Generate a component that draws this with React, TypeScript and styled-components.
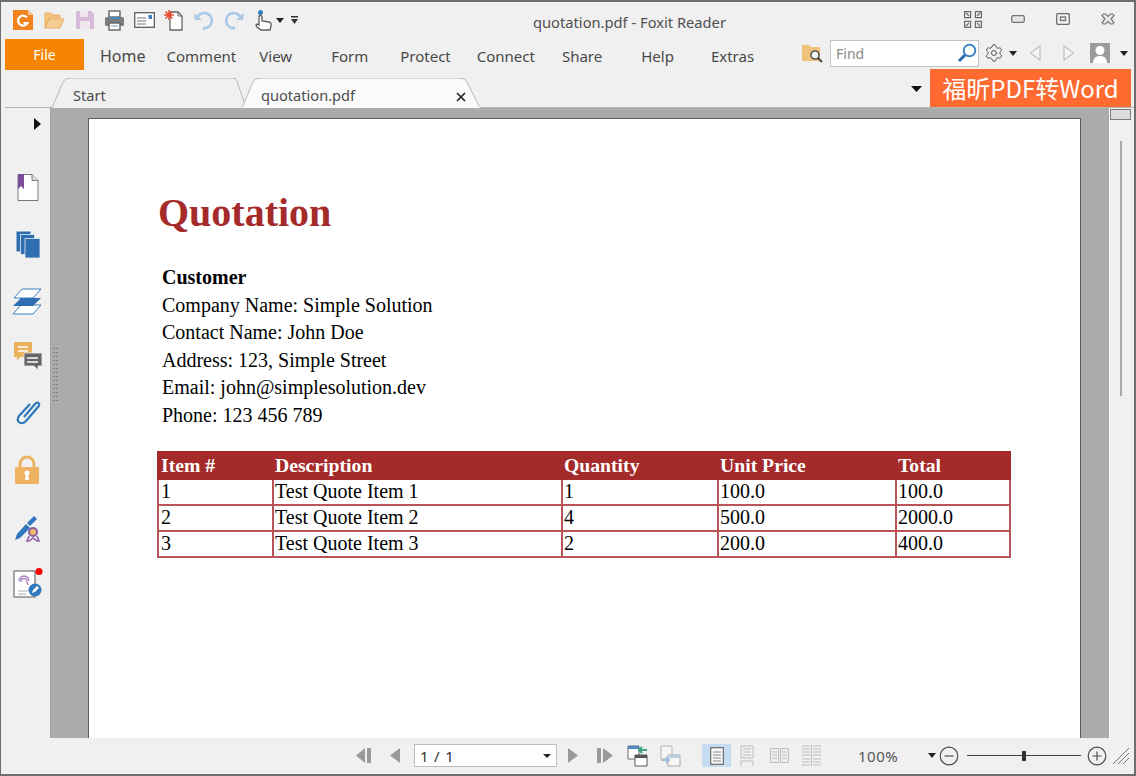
import React from "react";
import styled, { createGlobalStyle } from "styled-components";
import { Settings } from "lucide-react";

const Global = createGlobalStyle`
  html, body { margin: 0; padding: 0; background: #f0f0f0; }
  * { box-sizing: border-box; }
`;

const UI = `"Noto Sans", "Open Sans", sans-serif`;

const Win = styled.div`
  width: 1136px; height: 776px; display: flex; flex-direction: column;
  background: #f0f0f0; border: solid #6e6e6e; border-width: 2px 2px 2px 1px;
  overflow: hidden; font-family: ${UI}; color: #4a4a4a;
`;
const TitleRow = styled.div`
  height: 36px; flex: none; display: flex; align-items: center; padding-left: 11px; position: relative;
`;
const QuickIcon = styled.svg<{ $ml?: number }>`
  flex: none; display: block; margin-left: ${(p) => p.$ml ?? 0}px;
`;
const Title = styled.div`
  position: absolute; left: 532px; top: 11px; font-size: 14.7px; line-height: 19px; color: #4f4f4f; white-space: nowrap;
`;
const WinButtons = styled.div`
  margin-left: auto; display: flex; align-items: center; padding: 0 19px 2px 0;
`;
const MenuRow = styled.div`
  height: 32px; flex: none; display: flex; align-items: center; padding-left: 4px;
`;
const FileBtn = styled.div`
  width: 79px; height: 31px; background: #f58400; color: #fff; font-size: 14px; display: flex; align-items: center; justify-content: center; margin-right: 16px;
`;
const MenuItem = styled.div<{ $ml: number; $big?: boolean }>`
  margin-left: ${(p) => p.$ml}px; padding-top: ${(p) => (p.$big ? 4 : 3)}px; font-size: ${(p) => (p.$big ? 16 : 15)}px; color: #484848; line-height: 20px; white-space: nowrap;
`;
const RightTools = styled.div`
  margin-left: auto; display: flex; align-items: center; padding: 0 6px 2px 0;
`;
const FindBox = styled.div`
  width: 149px; height: 27px; margin-left: 7px; background: #fff; border: 1px solid #c4c4c4; display: flex; align-items: center; justify-content: space-between; padding: 0 1px 0 5px; font-size: 14px; color: #8a8a8a;
`;
const GearWrap = styled.div`
  margin-left: 5px; width: 20px; height: 20px; color: #555; display: flex;
`;
const TabRow = styled.div`
  height: 38px; flex: none; display: flex; align-items: flex-end; position: relative; border-bottom: 1px solid #b4b4b4; margin-left: 4px;
`;
const Tab = styled.div<{ $w: number; $ml: number; $pl: number }>`
  position: relative; width: ${(p) => p.$w}px; height: 30px; margin-left: ${(p) => p.$ml}px; padding-left: ${(p) => p.$pl}px; font-size: 14.6px; line-height: 35px; color: #4c4c4c; margin-bottom: -1px;
  & > span { position: relative; }
`;
const TabShape = styled.svg`
  position: absolute; left: 0; top: 0; display: block;
`;
const TabClose = styled.svg`
  position: absolute; right: 16px; top: 14px;
`;
const TabEnd = styled.div`
  margin-left: auto; display: flex; align-items: center; height: 38px;
`;
const TabCaret = styled.svg`
  display: block; margin-top: 2px;
`;
const Convert = styled.div`
  width: 201px; height: 38px; margin-left: 8px; margin-right: 3px; background: #ff6a30; color: #fff;
  font-family: "Noto Sans CJK SC", "Noto Sans", sans-serif; font-size: 24px; line-height: 38px; text-align: center; white-space: nowrap;
`;
const Body = styled.div`
  flex: 1; min-height: 0; display: flex;
`;
const SideBar = styled.div`
  width: 49px; flex: none; display: flex; flex-direction: column; align-items: center; position: relative; padding-left: 3px;
`;
const SideIcon = styled.svg<{ $mt: number; $ml?: number }>`
  display: block; flex: none; margin-top: ${(p) => p.$mt}px; margin-left: ${(p) => p.$ml ?? 0}px; overflow: visible;
`;
const Canvas = styled.div`
  flex: 1; min-width: 0; background: #ababab; padding: 10px 29px 0 37px; position: relative; overflow: hidden; border-left: 1px solid #a4a4a4;
`;
const Grip = styled.svg`
  position: absolute; left: 2px; top: 240px;
`;
const Page = styled.div`
  width: 993px; height: 640px; background: #fff; border: 1px solid #5b5b5b; border-bottom: 0; padding: 69px 69px 0 69px;
  font-family: "Liberation Serif", "Times New Roman", serif; color: #000;
`;
const H1 = styled.h1`
  margin: 0; font-size: 40px; line-height: 50px; font-weight: 700; color: #a52a2a;
`;
const Info = styled.div`
  margin: 26px 0 0 4px; font-size: 20px; line-height: 27.5px;
`;
const Strong = styled.div`
  font-weight: 700;
`;
const Quote = styled.table`
  margin: 22px 0 0 -1px; width: 852px; table-layout: fixed; border-collapse: collapse; font-size: 20px; line-height: 23px;
  th, td { border: 2px solid #bb5458; padding: 0 0 1px 1px; text-align: left; height: 26px; white-space: nowrap; }
  th:first-child, td:first-child { padding-left: 2px; }
  th { background: #a52a2a; color: #fff; border-color: #a52a2a; font-weight: 700; height: 27px; font-size: 19.7px; padding-bottom: 0; }
`;
const ScrollBar = styled.div`
  width: 25px; flex: none; background: #f0f0f0; position: relative; padding: 1px 0 0 0; border-left: 1px solid #f8f8f8;
`;
const SplitHandle = styled.div`
  width: 21px; height: 11px; background: #dcdcdc; border: 1px solid #7c7c7c;
`;
const Thumb = styled.div`
  width: 2px; height: 255px; margin: 21px 0 0 10px; background: #a9a9a9;
`;
const Status = styled.div`
  height: 36px; flex: none; display: flex; align-items: center; padding: 0 0 1px 355px; color: #4a4a4a;
`;
const PageBox = styled.div`
  width: 143px; height: 23px; margin: 0 0 0 14px; background: #fff; border: 1px solid #bdbdbd; display: flex; align-items: center; justify-content: space-between; padding: 0 5px; font-size: 15px; color: #333; letter-spacing: 0.8px;
`;
const Zoom = styled.div`
  width: 70px; margin-left: 37px; font-size: 15px; color: #555; letter-spacing: 0.5px;
`;
const Slider = styled.div`
  width: 114px; height: 1px; background: #444; margin: 0 6px 0 8px; display: flex; justify-content: center; align-items: center; position: relative;
`;
const Knob = styled.div`
  width: 4px; height: 10px; background: #333;
`;
const ActiveBtn = styled.div`
  width: 29px; height: 23px; margin-left: 21px; background: #c6dcf2; display: flex; align-items: center; justify-content: center;
`;

const Caret = ({ ml = 0 }: { ml?: number }) => (
  <QuickIcon $ml={ml} width="8" height="5" viewBox="0 0 8 5"><path d="M0 0h8L4 5z" fill="#222" /></QuickIcon>
);

const cols = [115, 289, 156, 178, 114];
const rows = [
  ["1", "Test Quote Item 1", "1", "100.0", "100.0"],
  ["2", "Test Quote Item 2", "4", "500.0", "2000.0"],
  ["3", "Test Quote Item 3", "2", "200.0", "400.0"],
];

export default function App() {
  return (
    <Win>
      <Global />
      <TitleRow>
        <QuickIcon width="22" height="22" viewBox="0 0 22 22">
          <path d="M1 1h15l5 5v15H1z" fill="#f2821e" /><path d="M16 1v5h5z" fill="#f8c79a" />
          <path d="M15 8.500a5 5 0 1 0 .5 5.500h-4" fill="none" stroke="#fff" strokeWidth="2.200" />
        </QuickIcon>
        <QuickIcon $ml={10} width="21" height="18" viewBox="0 0 21 18">
          <path d="M1 17V2h6l2 2h7v3H5L1 17z" fill="#f3c47f" stroke="#e9ad5f" /><path d="M1 17l4-9h15l-4 9z" fill="#f6cf95" stroke="#e9ad5f" />
        </QuickIcon>
        <QuickIcon $ml={11} width="18" height="18" viewBox="0 0 18 18">
          <path d="M0 0h15l3 3v15H0z" fill="#d6bcd9" /><path d="M4 0h8v6H4z" fill="#efe6f0" /><path d="M4 10h10v8H4z" fill="#efe6f0" />
        </QuickIcon>
        <QuickIcon $ml={10} width="21" height="21" viewBox="0 0 21 21">
          <path d="M5 1h11v6H5z" fill="#fff" stroke="#6a6a6a" strokeWidth="1.500" /><rect x="1" y="7" width="19" height="9" rx="1.500" fill="#7d7d7d" />
          <path d="M5 7h11v2H5z" fill="#4b8bc4" /><path d="M5 13h11v7H5z" fill="#fff" stroke="#6a6a6a" strokeWidth="1.500" /><path d="M7 16h7" stroke="#6ba2d2" />
        </QuickIcon>
        <QuickIcon $ml={9} width="21" height="16" viewBox="0 0 21 16">
          <rect x="0.700" y="0.700" width="19.600" height="14.600" fill="#fff" stroke="#5f5f5f" strokeWidth="1.300" />
          <path d="M3 6h9M3 9h9M3 12h9" stroke="#777" /><rect x="14.500" y="3" width="3.500" height="4" fill="#3f7fbc" />
        </QuickIcon>
        <QuickIcon $ml={9} width="19" height="22" viewBox="0 0 19 22">
          <path d="M6 3h8l4 4v14H6z" fill="#fff" stroke="#666" strokeWidth="1.300" /><path d="M14 3v4h4" fill="none" stroke="#666" />
          <path d="M5 1v10M0 6h10M1.500 2.500l7 7M8.500 2.500l-7 7" stroke="#e8492a" strokeWidth="1.400" />
        </QuickIcon>
        <QuickIcon $ml={11} width="20" height="20" viewBox="0 0 20 20">
          <path d="M4 6.500A7.500 7.500 0 1 1 9 18" fill="none" stroke="#a9c9e6" strokeWidth="2.800" /><path d="M0 3l1 7h7z" fill="#a9c9e6" />
        </QuickIcon>
        <QuickIcon $ml={10} width="20" height="20" viewBox="0 0 20 20">
          <path d="M16 6.500A7.500 7.500 0 1 0 11 18" fill="none" stroke="#a9c9e6" strokeWidth="2.800" /><path d="M20 3l-1 7h-7z" fill="#a9c9e6" />
        </QuickIcon>
        <QuickIcon $ml={11} width="19" height="22" viewBox="0 0 19 22">
          <path d="M4 16V8a1.500 1.500 0 0 1 3 0v4l7 1c2 .5 2.500 2 2 4l-1 4H6l-4-3 -1-2c0-1 2-1 3 0z" fill="#fff" stroke="#5e5e5e" strokeWidth="1.300" />
          <circle cx="5.500" cy="3.500" r="2.500" fill="#2f7fc1" />
        </QuickIcon>
        <Caret ml={2} />
        <QuickIcon $ml={7} width="7" height="8" viewBox="0 0 7 8"><path d="M0 0h7v1.500H0zM0 3h7L3.500 8z" fill="#333" /></QuickIcon>
        <Title>quotation.pdf - Foxit Reader</Title>
        <WinButtons>
          <QuickIcon width="18" height="17" viewBox="0 0 18 17" fill="none" stroke="#6a6a6a" strokeWidth="1.200">
            <path d="M.6.600h6v6h-6zM11.400.600h6v6h-6zM.6 10.400h6v6h-6zM11.400 10.400h6v6h-6z" /><path d="M2 2l3 3M16 2l-3 3M2 15l3-3M16 15l-3-3" />
          </QuickIcon>
          <QuickIcon $ml={29} width="14" height="8" viewBox="0 0 14 8"><rect x=".7" y=".7" width="12.600" height="6.600" rx="1.500" fill="#e6e6e6" stroke="#737373" strokeWidth="1.300" /></QuickIcon>
          <QuickIcon $ml={31} width="14" height="12" viewBox="0 0 14 12" fill="none" stroke="#6e6e6e" strokeWidth="1.300"><rect x=".7" y=".7" width="12.600" height="10.600" rx="1" /><rect x="4.500" y="4" width="5" height="3.500" /></QuickIcon>
          <QuickIcon $ml={31} width="14" height="12" viewBox="0 0 14 12"><path d="M1 2.500L2.500 1H4.500L7 3.500 9.500 1h2L13 2.500 10 6l3 3.500L11.500 11h-2L7 8.500 4.500 11h-2L1 9.500 4 6z" fill="#e8e8e8" stroke="#777" strokeWidth="1.200" /></QuickIcon>
        </WinButtons>
      </TitleRow>
      <MenuRow>
        <FileBtn>File</FileBtn>
        <MenuItem $big $ml={0}>Home</MenuItem>
        <MenuItem $ml={21}>Comment</MenuItem>
        <MenuItem $ml={23}>View</MenuItem>
        <MenuItem $ml={39}>Form</MenuItem>
        <MenuItem $ml={32}>Protect</MenuItem>
        <MenuItem $ml={26}>Connect</MenuItem>
        <MenuItem $ml={27}>Share</MenuItem>
        <MenuItem $ml={39}>Help</MenuItem>
        <MenuItem $ml={37}>Extras</MenuItem>
        <RightTools>
          <QuickIcon width="21" height="19" viewBox="0 0 21 19">
            <path d="M0 17V1h7l2 2h9v14z" fill="#f1c27c" /><circle cx="13" cy="11" r="4" fill="#fff" stroke="#555" strokeWidth="1.600" /><path d="M16 14l4 4" stroke="#444" strokeWidth="2" />
          </QuickIcon>
          <FindBox>
            Find
            <QuickIcon width="20" height="20" viewBox="0 0 20 20"><circle cx="12.500" cy="7.500" r="5.800" fill="#fff" stroke="#3b86c6" strokeWidth="2" /><path d="M8 12l-6 6" stroke="#2a6aa8" strokeWidth="3" /></QuickIcon>
          </FindBox>
          <GearWrap><Settings size={20} strokeWidth={1.200} /></GearWrap>
          <Caret ml={5} />
          <QuickIcon $ml={12} width="12" height="16" viewBox="0 0 12 16"><path d="M11 1L1.500 8 11 15z" fill="#f5f5f5" stroke="#c2c2c2" strokeWidth="1.200" /></QuickIcon>
          <QuickIcon $ml={22} width="12" height="16" viewBox="0 0 12 16"><path d="M1 1l9.500 7L1 15z" fill="#f5f5f5" stroke="#c2c2c2" strokeWidth="1.200" /></QuickIcon>
          <QuickIcon $ml={15} width="20" height="20" viewBox="0 0 20 20">
            <rect width="20" height="20" fill="#9c9c9c" /><circle cx="10" cy="7.500" r="4.500" fill="#fff" /><path d="M3 20c0-6 4-7 7-7s7 1 7 7z" fill="#fff" />
          </QuickIcon>
          <Caret ml={10} />
        </RightTools>
      </MenuRow>
      <TabRow>
        <Tab $w={197} $ml={46} $pl={22}>
          <TabShape width="197" height="30" viewBox="0 0 197 30"><path d="M1 30L12 4Q14 0 19 0H181Q185 0 186 3L195 30" fill="#f0f0f0" stroke="#b6b6b6" /></TabShape>
          <span>Start</span>
        </Tab>
        <Tab $w={241} $ml={-7} $pl={20}>
          <TabShape width="241" height="30" viewBox="0 0 241 30"><path d="M1 30L12 4Q14 0 19 0H219Q224 0 226 4L239 30Z" fill="#fafafa" stroke="#b6b6b6" /><path d="M1 30H239" stroke="#fafafa" strokeWidth="2" /></TabShape>
          <span>quotation.pdf</span>
          <TabClose width="10" height="10" viewBox="0 0 10 10"><path d="M1 1l8 8M9 1L1 9" stroke="#222" strokeWidth="1.700" /></TabClose>
        </Tab>
        <TabEnd>
          <TabCaret width="11" height="6" viewBox="0 0 11 6"><path d="M0 0h11L5.500 6z" fill="#111" /></TabCaret>
          <Convert>福昕PDF转Word</Convert>
        </TabEnd>
      </TabRow>
      <Body>
        <SideBar>
          <SideIcon $mt={10} $ml={20} width="7" height="12" viewBox="0 0 7 12"><path d="M0 0l7 6-7 6z" fill="#111" /></SideIcon>
          <SideIcon $mt={44} $ml={2} width="22" height="27" viewBox="0 0 22 27">
            <path d="M1 .5h14l6 6v20H1z" fill="#fff" stroke="#7a7a7a" /><path d="M15 .5v6h6" fill="#ddd" stroke="#7a7a7a" /><path d="M1 0h6v15L4 12l-3 3z" fill="#7b4c97" />
          </SideIcon>
          <SideIcon $mt={30} $ml={2} width="24" height="27" viewBox="0 0 24 27">
            <path d="M.5.500h14v20H.5z" fill="#2f6fb1" /><path d="M4.500 3.500h14v20h-14z" fill="#2f6fb1" stroke="#e8eef5" strokeWidth=".8" /><path d="M9 7.500h15V27H9z" fill="#2f6fb1" stroke="#e8eef5" strokeWidth=".8" />
          </SideIcon>
          <SideIcon $mt={30} width="30" height="27" viewBox="0 0 30 27">
            <path d="M10 1h19l-8 9H2z" fill="#fff" stroke="#3b7fc0" /><path d="M9 17h20l-8 9H1z" fill="#fff" stroke="#3b7fc0" /><path d="M9 10h20l-8 8H1z" fill="#2f6fb1" />
          </SideIcon>
          <SideIcon $mt={27} width="29" height="28" viewBox="0 0 29 28">
            <path d="M1 0h18v15H7l-3 4v-4H1z" fill="#ecb25e" /><path d="M5 5h10M5 9h10" stroke="#fff" strokeWidth="1.500" />
            <path d="M11 11h18v13h-4v4l-4-4H11z" fill="#666" stroke="#f0f0f0" strokeWidth=".8" /><path d="M14 16h11M14 20h11" stroke="#fff" strokeWidth="1.500" />
          </SideIcon>
          <SideIcon $mt={30} width="25" height="27" viewBox="0 0 25 27">
            <path d="M9 17L20 4c3-3 6 0 3 3L11 21c-5 5-11 0-7-5L15 4" fill="none" stroke="#2f78bd" strokeWidth="2.200" />
          </SideIcon>
          <SideIcon $mt={29} width="24" height="29" viewBox="0 0 24 29">
            <path d="M5 13V8a7 7 0 0 1 14 0v5" fill="none" stroke="#eeb263" strokeWidth="3" /><rect y="11" width="24" height="17" rx="1" fill="#eeb263" />
            <circle cx="12" cy="17" r="2.500" fill="#fff" /><path d="M11 18h2l1 6h-4z" fill="#fff" />
          </SideIcon>
          <SideIcon $mt={29} width="26" height="27" viewBox="0 0 26 27">
            <path d="M1 26l2-6L12 10l4 4L6 24z" fill="#2f78bd" /><path d="M13 9l7-7 3 3-7 7z" fill="#2f78bd" />
            <circle cx="19" cy="18" r="4" fill="#f0bb66" stroke="#8a5ca8" strokeWidth="2" /><path d="M15 22l-2 5h2l4-3 4 3h2l-2-5" fill="none" stroke="#8a5ca8" strokeWidth="1.500" />
          </SideIcon>
          <SideIcon $mt={27} width="29" height="29" viewBox="0 0 29 29">
            <rect x="1" y="3" width="21" height="26" fill="#fff" stroke="#6f6f6f" strokeWidth="1.200" />
            <path d="M6 13a5 5 0 0 1 10 0M8 14a3 3 0 0 1 6-1c0 3 1 3 1 4" fill="none" stroke="#a57ec0" strokeWidth="1.300" /><path d="M5 23h10M5 26h8" stroke="#aaa" />
            <circle cx="22" cy="22" r="6.500" fill="#2f78bd" /><path d="M19 25l1-3 4-4 2 2-4 4z" fill="#fff" /><circle cx="26" cy="3.500" r="3.500" fill="#f00" />
          </SideIcon>
        </SideBar>
        <Canvas>
          <Grip width="6" height="56" viewBox="0 0 6 56"><path d="M0 .5h6M0 4.500h6M0 8.500h6M0 12.500h6M0 16.500h6M0 20.500h6M0 24.500h6M0 28.500h6M0 32.500h6M0 36.500h6M0 40.500h6M0 44.500h6M0 48.500h6M0 52.500h6" stroke="#7d7d7d" strokeDasharray="2 1" /></Grip>
          <Page>
            <H1>Quotation</H1>
            <Info>
              <Strong>Customer</Strong>
              <div>Company Name: Simple Solution</div>
              <div>Contact Name: John Doe</div>
              <div>Address: 123, Simple Street</div>
              <div>Email: john@simplesolution.dev</div>
              <div>Phone: 123 456 789</div>
            </Info>
            <Quote>
              <colgroup>{cols.map((w, i) => <col key={i} style={{ width: w }} />)}</colgroup>
              <thead><tr><th>Item #</th><th>Description</th><th>Quantity</th><th>Unit Price</th><th>Total</th></tr></thead>
              <tbody>{rows.map((r) => <tr key={r[0]}>{r.map((c, i) => <td key={i}>{c}</td>)}</tr>)}</tbody>
            </Quote>
          </Page>
        </Canvas>
        <ScrollBar>
          <SplitHandle />
          <Thumb />
        </ScrollBar>
      </Body>
      <Status>
        <QuickIcon width="16" height="15" viewBox="0 0 16 15"><path d="M0 7.500L9 0v15zM11 0h4v15h-4z" fill="#9a9a9a" /></QuickIcon>
        <QuickIcon $ml={18} width="10" height="15" viewBox="0 0 10 15"><path d="M0 7.500L10 0v15z" fill="#9a9a9a" /></QuickIcon>
        <PageBox>1 / 1<QuickIcon width="8" height="4" viewBox="0 0 8 4"><path d="M0 0h8L4 4z" fill="#222" /></QuickIcon></PageBox>
        <QuickIcon $ml={11} width="10" height="15" viewBox="0 0 10 15"><path d="M0 0l10 7.500L0 15z" fill="#9a9a9a" /></QuickIcon>
        <QuickIcon $ml={19} width="16" height="15" viewBox="0 0 16 15"><path d="M0 0h4v15H0zM6 0l10 7.500L6 15z" fill="#9a9a9a" /></QuickIcon>
        <QuickIcon $ml={14} width="21" height="22" viewBox="0 0 21 22">
          <path d="M1 1h11v13H1z" fill="#fff" stroke="#6a6a6a" /><path d="M1 1h11v3H1z" fill="#4e86bd" /><path d="M8 10h12v11H8z" fill="#fff" stroke="#555" /><path d="M8 10h12v3H8z" fill="#555" /><path d="M20 5h-7M15 2l-3 3 3 3" fill="none" stroke="#3fa37c" strokeWidth="2" />
        </QuickIcon>
        <QuickIcon $ml={12} width="21" height="22" viewBox="0 0 21 22" opacity=".45">
          <path d="M1 1h11v13H1z" fill="#fff" stroke="#6a6a6a" /><path d="M8 10h12v11H8z" fill="#fff" stroke="#555" /><path d="M8 10h12v3H8z" fill="#7aa6d2" /><path d="M1 15h7M6 12l3 3-3 3" fill="none" stroke="#3f86c3" strokeWidth="2" />
        </QuickIcon>
        <ActiveBtn>
          <QuickIcon width="14" height="18" viewBox="0 0 14 18"><rect x=".7" y=".7" width="12.600" height="16.600" fill="#fafafa" stroke="#6a6a6a" strokeWidth="1.200" /><path d="M3 5h8M3 8h8M3 11h8M3 14h8" stroke="#888" /></QuickIcon>
        </ActiveBtn>
        <QuickIcon $ml={9} width="14" height="21" viewBox="0 0 14 21" fill="none" stroke="#bdbdbd"><path d="M1 13V1h12v12zM3 4h8M3 7h8M3 10h8M1 21v-5h12v5" /></QuickIcon>
        <QuickIcon $ml={16} width="19" height="15" viewBox="0 0 19 15" fill="none" stroke="#bdbdbd"><path d="M.5.500h8v14h-8zM10.500.500h8v14h-8zM2 4h5M2 7h5M2 10h5M12 4h5M12 7h5M12 10h5" /></QuickIcon>
        <QuickIcon $ml={13} width="19" height="21" viewBox="0 0 19 21" fill="none" stroke="#bdbdbd"><path d="M0 1h8M0 4h8M0 7h8M0 10h8M11 1h8M11 4h8M11 7h8M11 10h8M0 14h8M0 17h8M0 20h8M11 14h8M11 17h8M11 20h8M9.500 0v21" /></QuickIcon>
        <Zoom>100%</Zoom>
        <Caret />
        <QuickIcon $ml={3} width="20" height="20" viewBox="0 0 20 20" fill="none" stroke="#4f4f4f" strokeWidth="1.200"><circle cx="10" cy="10" r="8.800" /><path d="M5.500 10h9" /></QuickIcon>
        <Slider><Knob /></Slider>
        <QuickIcon width="20" height="20" viewBox="0 0 20 20" fill="none" stroke="#4f4f4f" strokeWidth="1.200"><circle cx="10" cy="10" r="8.800" /><path d="M5.500 10h9M10 5.500v9" /></QuickIcon>
        <QuickIcon $ml={6} width="16" height="16" viewBox="0 0 16 16" fill="none" stroke="#777"><path d="M0 16L16 0M5 16L16 5M10 16l6-6" /></QuickIcon>
      </Status>
    </Win>
  );
}
